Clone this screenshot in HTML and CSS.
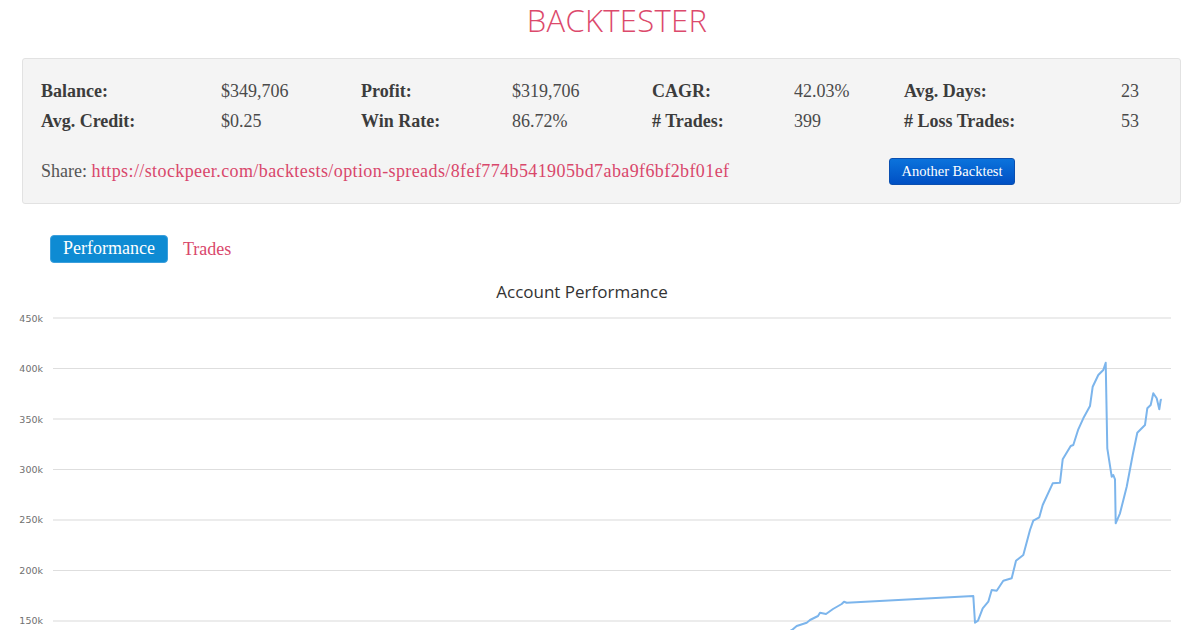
FILE: index.html
```html
<!DOCTYPE html>
<html>
<head>
<meta charset="utf-8">
<link rel="stylesheet" href="styles.css">
</head>
<body>
<h1 class="title">BACKTESTER</h1>
<section class="panel">
  <div class="stats">
    <span class="lbl">Balance:</span><span class="val">$349,706</span>
    <span class="lbl">Profit:</span><span class="val">$319,706</span>
    <span class="lbl">CAGR:</span><span class="val">42.03%</span>
    <span class="lbl">Avg. Days:</span><span class="val end">23</span>
    <span class="lbl">Avg. Credit:</span><span class="val">$0.25</span>
    <span class="lbl">Win Rate:</span><span class="val">86.72%</span>
    <span class="lbl"># Trades:</span><span class="val">399</span>
    <span class="lbl"># Loss Trades:</span><span class="val end">53</span>
  </div>
  <div class="share-row">
    <p class="share">Share: <a href="#">https://stockpeer.com/backtests/option-spreads/8fef774b541905bd7aba9f6bf2bf01ef</a></p>
    <button class="btn">Another Backtest</button>
  </div>
</section>
<nav class="tabs">
  <span class="tab active">Performance</span>
  <span class="tab">Trades</span>
</nav>
<section class="chart">
  <h2 class="chart-title">Account Performance</h2>
  <svg class="plot" width="1200" height="330" viewBox="0 0 1200 330">
    <g transform="translate(0,-300)">
      <g class="grid">
        <line x1="53" x2="1171" y1="318" y2="318" class="thick"/>
        <line x1="53" x2="1171" y1="368.5" y2="368.5"/>
        <line x1="53" x2="1171" y1="419" y2="419" class="thick"/>
        <line x1="53" x2="1171" y1="469.5" y2="469.5"/>
        <line x1="53" x2="1171" y1="520" y2="520" class="thick"/>
        <line x1="53" x2="1171" y1="570.5" y2="570.5"/>
        <line x1="53" x2="1171" y1="621" y2="621" class="thick"/>
      </g>
      <g class="ylabels">
        <text x="43" y="322">450k</text>
        <text x="43" y="372">400k</text>
        <text x="43" y="423">350k</text>
        <text x="43" y="473">300k</text>
        <text x="43" y="523">250k</text>
        <text x="43" y="574">200k</text>
        <text x="43" y="624">150k</text>
      </g>
      <polyline class="series" points="780,636 792,630 796.7,626 806.7,622.7 810,620 818,616 820,612.7 826,614 833,609 841.7,604 844,601.7 846.7,602.7 973.3,596 975,622.7 978,620.7 982.7,608.3 988.3,601.7 991.7,590 996.7,590.7 1003.3,580.7 1011.7,578.3 1016,560.7 1023.3,555 1030,530 1033.3,520.7 1039.3,517.3 1042.7,505 1052.7,483.3 1060,482.7 1062.7,459.3 1070.7,446 1073.3,445 1078.3,429.3 1083.3,418.3 1090,406 1092.7,386.7 1098.3,375 1103.3,370 1105.7,362.7 1107.3,448.3 1111.7,476.7 1113.3,475 1115,479.3 1115.7,523.3 1120,513.3 1126.7,486.7 1132.7,455 1137.3,432.7 1145,425 1147.3,408.3 1150.7,405 1153.3,393.3 1156.7,398.3 1159.3,409.3 1160.7,400 1161.7,399.3"/>
    </g>
  </svg>
</section>
</body>
</html>
```
FILE: styles.css
```css
* { box-sizing: border-box; }
html, body { margin: 0; padding: 0; background: #fff; overflow: hidden; }
body { font-family: "Liberation Serif", serif; color: #333; }

.title {
  margin: 0;
  padding: 1px 0 0 34px;
  height: 58px;
  text-align: center;
  font-family: "Open Sans", "DejaVu Sans", sans-serif;
  font-weight: 300;
  font-size: 31px;
  line-height: 38px;
  color: #dc4a6c;
  letter-spacing: 0.3px;
}

.panel {
  margin: 0 19px 0 22px;
  height: 146px;
  background: #f4f4f4;
  border: 1px solid #e2e2e2;
  border-radius: 3px;
  padding: 17px 41px 0 18px;
}

.stats {
  display: grid;
  grid-template-columns: 180px 140px 151px 140px 142px 110px 1fr auto;
  grid-auto-rows: 30px;
  align-items: center;
  font-size: 18px;
}
.lbl { font-weight: bold; color: #3c3c3c; }
.val { color: #4a4a4a; }
.val.end { text-align: right; }

.share-row {
  display: grid;
  grid-template-columns: 848px auto;
  align-items: center;
  margin-top: 22px;
}
.share { margin: 0; font-size: 18px; color: #555; white-space: nowrap; }
.share a { color: #d9476b; text-decoration: none; letter-spacing: 0.4px; }

.btn {
  justify-self: start;
  width: 126px;
  height: 27px;
  border: 1px solid #0a4fb0;
  border-radius: 3px;
  background: linear-gradient(#0b73dc, #0050c4);
  color: #fff;
  font-family: "Liberation Serif", serif;
  font-size: 14.5px;
  padding: 0;
}

.tabs {
  display: flex;
  align-items: center;
  gap: 15px;
  margin: 31px 0 0 50px;
  height: 28px;
}
.tab { font-size: 18px; color: #d9476b; }
.tab.active {
  background: #0e8bd3;
  color: #fff;
  border: 1px solid #3c9fdc;
  border-radius: 4px;
  padding: 2px 12px 3px;
  line-height: 21px;
}

.chart { margin-top: 20px; }
.chart-title {
  margin: 0;
  padding-right: 36px;
  text-align: center;
  font-family: "Open Sans", "DejaVu Sans", sans-serif;
  font-weight: 400;
  font-size: 17px;
  line-height: 17px;
  color: #333;
}
.plot { display: block; margin-top: 0; }
.grid line { stroke: #dedede; stroke-width: 1; }
.grid line.thick { stroke: #ececec; stroke-width: 2; }
.ylabels text {
  font-family: "DejaVu Sans", sans-serif;
  font-size: 9.5px;
  fill: #707070;
  text-anchor: end;
}
.series { fill: none; stroke: #7cb5ec; stroke-width: 2; stroke-linejoin: round; }
```
